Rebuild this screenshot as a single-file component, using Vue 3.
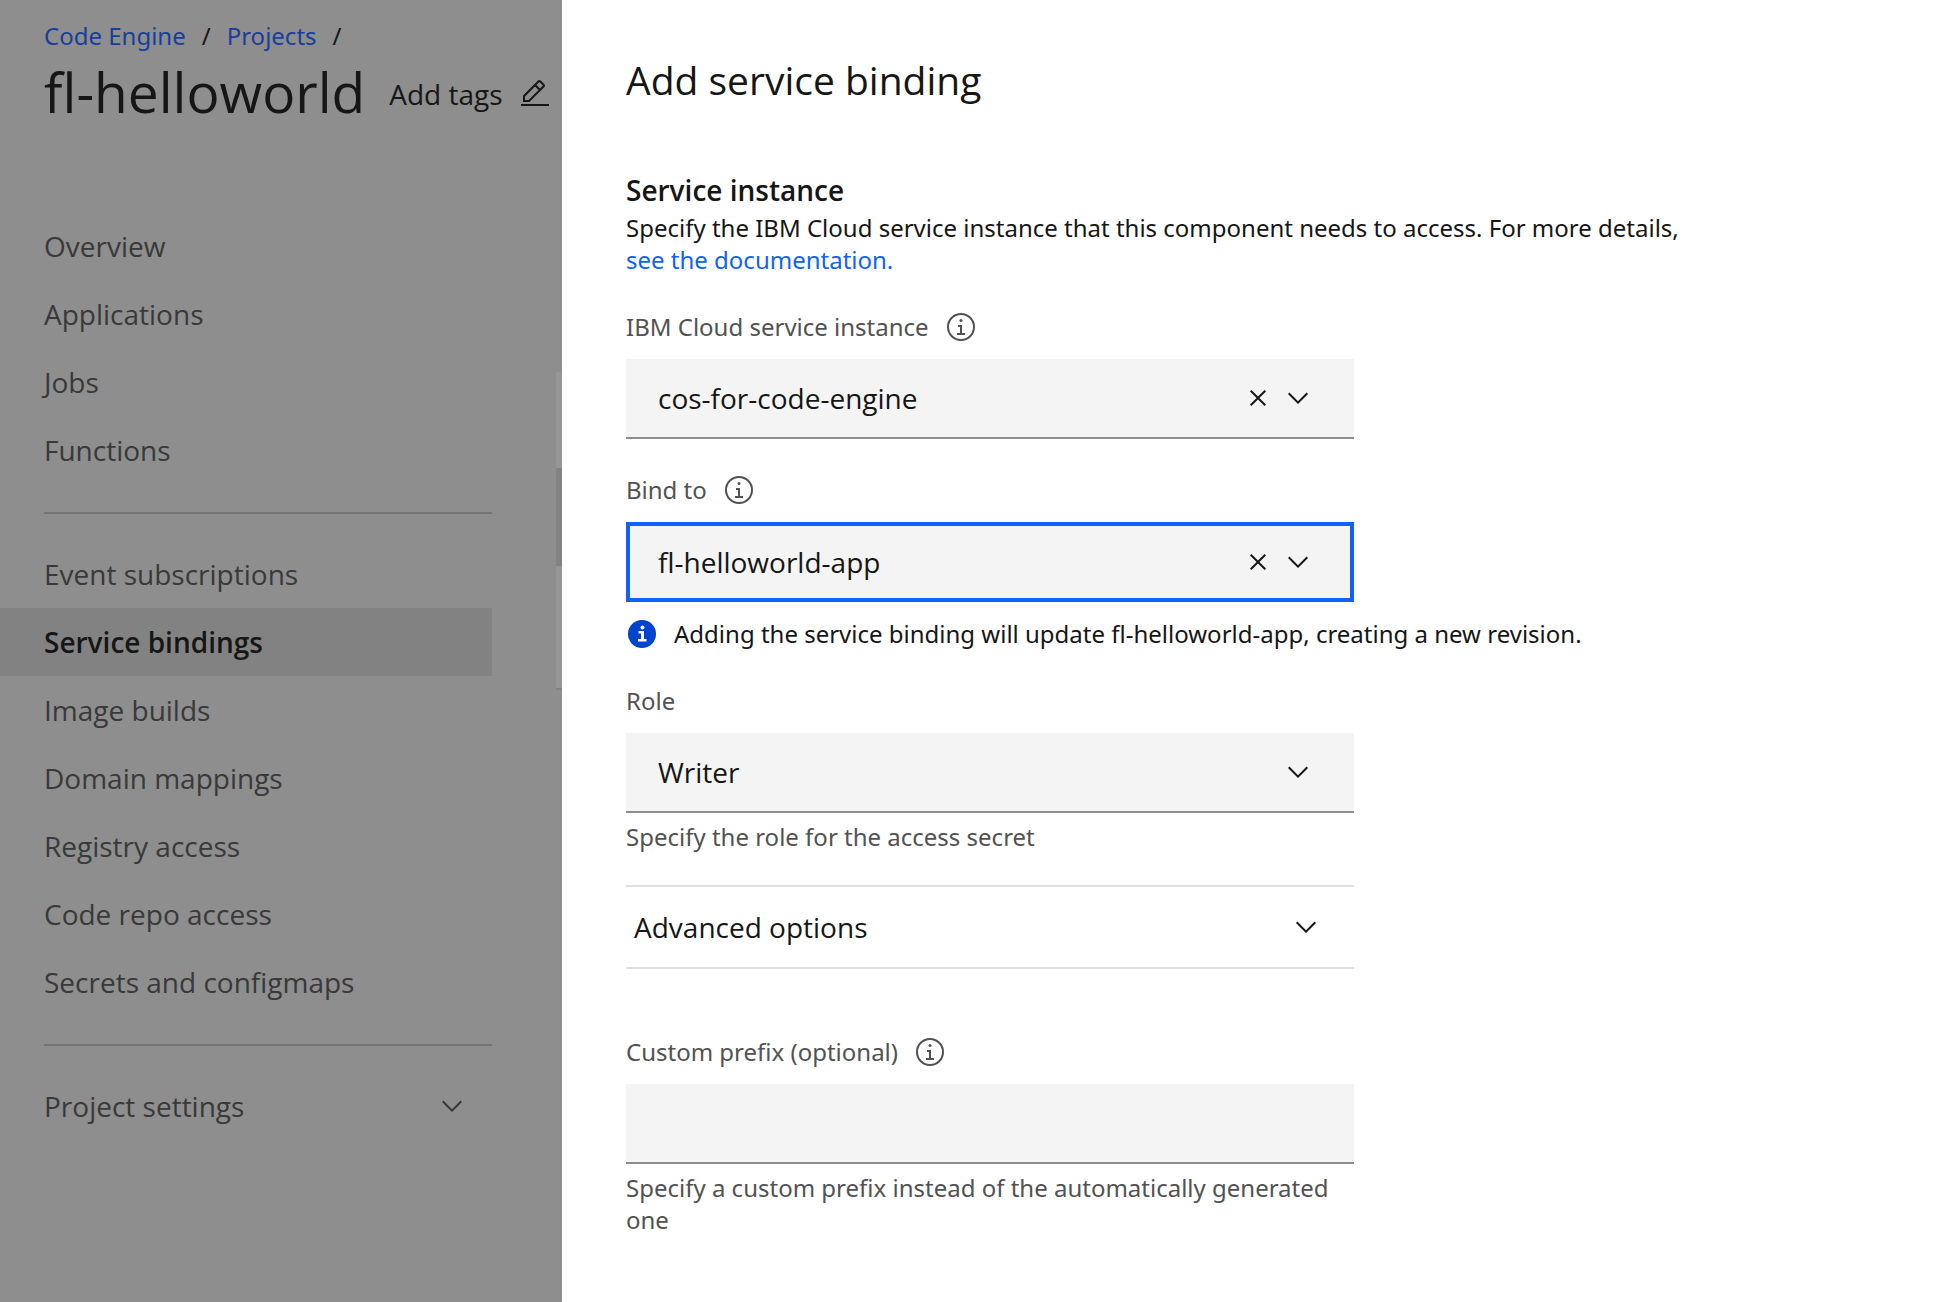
<script setup>
import { ref } from 'vue'

const mainLinks = ['Overview', 'Applications', 'Jobs', 'Functions']
const resourceLinks = [
  'Event subscriptions',
  'Service bindings',
  'Image builds',
  'Domain mappings',
  'Registry access',
  'Code repo access',
  'Secrets and configmaps',
]
const current = 'Service bindings'

const instance = ref('cos-for-code-engine')
const target = ref('fl-helloworld-app')
const role = ref('Writer')
const prefix = ref('')
</script>

<template>
  <div class="page">
    <svg class="sprite" aria-hidden="true">
      <symbol id="chevron" viewBox="0 0 16 16">
        <path d="M8 11 3 6 3.7 5.3 8 9.6 12.3 5.3 13 6z" />
      </symbol>
      <symbol id="close" viewBox="0 0 16 16">
        <path d="M12 4.7 11.3 4 8 7.3 4.7 4 4 4.7 7.3 8 4 11.3 4.7 12 8 8.7 11.3 12 12 11.3 8.7 8z" />
      </symbol>
      <symbol id="info" viewBox="0 0 32 32">
        <circle cx="16" cy="16" r="13" fill="none" stroke="currentColor" stroke-width="2" />
        <path d="M17 22V14H13V16H15V22H12V24H20V22z" />
        <circle cx="16" cy="9.5" r="1.5" />
      </symbol>
      <symbol id="edit" viewBox="0 0 32 32">
        <path d="M2 26H30V28H2zM25.4 9c.8-.8.8-2 0-2.8l-3.6-3.6c-.8-.8-2-.8-2.8 0l-15 15V24h6.4zM20.4 4 24 7.6l-3 3L17.4 7zM6 22v-3.6l10-10 3.6 3.6-10 10z" />
      </symbol>
    </svg>

    <aside class="backdrop">
      <div class="side">
        <nav class="crumbs" aria-label="Breadcrumb">
          <a href="#">Code Engine</a><span>/</span><a href="#">Projects</a><span>/</span>
        </nav>
        <div class="project">
          <h1>fl-helloworld</h1>
          <button type="button" class="tags">
            Add tags
            <svg class="icon"><use href="#edit" /></svg>
          </button>
        </div>

        <nav class="menu" aria-label="Project">
          <a v-for="item in mainLinks" :key="item" href="#">{{ item }}</a>
          <hr />
          <a
            v-for="item in resourceLinks"
            :key="item"
            href="#"
            :class="{ selected: item === current }"
          >{{ item }}</a>
          <hr />
          <button type="button">
            Project settings
            <svg class="icon"><use href="#chevron" /></svg>
          </button>
        </nav>
      </div>
      <div class="table-edge">
        <div class="edge-toolbar"></div>
        <div class="edge-header"></div>
        <div class="edge-body"></div>
      </div>
    </aside>

    <main class="panel">
      <h2>Add service binding</h2>

      <h3>Service instance</h3>
      <p class="intro">
        Specify the IBM Cloud service instance that this component needs to access. For more details,
        <a href="#">see the documentation.</a>
      </p>

      <form class="form" @submit.prevent>
        <div class="field">
          <div class="label">
            <label for="instance">IBM Cloud service instance</label>
            <button type="button" aria-label="About service instance"><svg class="icon"><use href="#info" /></svg></button>
          </div>
          <div class="combo">
            <input id="instance" v-model="instance" type="text" />
            <button type="button" aria-label="Clear instance" @click="instance = ''"><svg class="icon"><use href="#close" /></svg></button>
            <button type="button" aria-label="Open instances"><svg class="icon"><use href="#chevron" /></svg></button>
          </div>
        </div>

        <div class="field">
          <div class="label">
            <label for="target">Bind to</label>
            <button type="button" aria-label="About bind to"><svg class="icon"><use href="#info" /></svg></button>
          </div>
          <div class="combo focused">
            <input id="target" v-model="target" type="text" />
            <button type="button" aria-label="Clear target" @click="target = ''"><svg class="icon"><use href="#close" /></svg></button>
            <button type="button" aria-label="Open targets"><svg class="icon"><use href="#chevron" /></svg></button>
          </div>
          <p class="notice">
            <svg class="icon" viewBox="0 0 32 32">
              <circle cx="16" cy="16" r="14" fill="#0043ce" />
              <path d="M18 21V13H12.500V15.500H15V21H12V23.500H20.500V21z" fill="#fff" />
              <circle cx="16.500" cy="9.500" r="2" fill="#fff" />
            </svg>
            Adding the service binding will update fl-helloworld-app, creating a new revision.
          </p>
        </div>

        <div class="field">
          <div class="label"><label for="role">Role</label></div>
          <div class="combo">
            <select id="role" v-model="role">
              <option>Reader</option>
              <option>Writer</option>
              <option>Manager</option>
            </select>
            <svg class="icon select-arrow"><use href="#chevron" /></svg>
          </div>
          <p class="helper">Specify the role for the access secret</p>
        </div>

        <button type="button" class="accordion">
          Advanced options
          <svg class="icon"><use href="#chevron" /></svg>
        </button>

        <div class="field">
          <div class="label">
            <label for="prefix">Custom prefix (optional)</label>
            <button type="button" aria-label="About custom prefix"><svg class="icon"><use href="#info" /></svg></button>
          </div>
          <div class="combo"><input id="prefix" v-model="prefix" type="text" /></div>
          <p class="helper">Specify a custom prefix instead of the automatically generated one</p>
        </div>
      </form>
    </main>
  </div>
</template>

<style>
body {
  margin: 0;
}
</style>

<style scoped>
.page {
  display: flex;
  min-height: 100vh;
  color: #161616;
  font: 400 28px/36px "Open Sans", "Noto Sans", sans-serif;
}
h1, h2, h3, p {
  margin: 0;
}
a {
  text-decoration: none;
}
button {
  padding: 0;
  border: 0;
  background: none;
  color: inherit;
  font: inherit;
  cursor: pointer;
}
.sprite {
  position: absolute;
  width: 0;
  height: 0;
}
.icon {
  display: block;
  flex: none;
  width: 32px;
  height: 32px;
  fill: currentColor;
}

/* Dimmed page behind the panel */
.backdrop {
  display: flex;
  flex: none;
  width: 562px;
  background: #8e8e8e;
}
.side {
  flex: 1;
  min-width: 0;
  padding-top: 20px;
}
.crumbs {
  display: flex;
  gap: 16px;
  padding-left: 44px;
  font: 400 24px/32px "Noto Sans", sans-serif;
}
.crumbs a {
  color: #173f9b;
}
.project {
  display: flex;
  align-items: center;
  gap: 24px;
  margin-top: 8px;
  padding-left: 44px;
  white-space: nowrap;
}
h1 {
  font-size: 55px;
  font-weight: 400;
  line-height: 64px;
}
.tags {
  display: flex;
  align-items: center;
  gap: 16px;
  padding-top: 4px;
}
.menu {
  display: flex;
  flex-direction: column;
  width: 492px;
  margin-top: 88px;
  color: #393939;
}
.menu a,
.menu button {
  display: flex;
  align-items: center;
  justify-content: space-between;
  height: 68px;
  padding: 0 24px 0 44px;
  color: inherit;
}
.menu .selected {
  background: #828282;
  color: #161616;
  font-weight: 600;
}
.menu hr {
  height: 2px;
  margin: 28px 0 26px 44px;
  border: 0;
  background: #747474;
}
.table-edge {
  width: 6px;
  padding-top: 372px;
}
.edge-toolbar {
  height: 96px;
  background: #969696;
}
.edge-header {
  height: 98px;
  background: #828282;
}
.edge-body {
  height: 122px;
  border-bottom: 2px solid #848484;
  background: #969696;
}

/* Side panel */
.panel {
  flex: 1;
  min-width: 0;
  padding: 56px 64px 64px;
  background: #fff;
}
h2 {
  font-size: 39px;
  font-weight: 400;
  line-height: 48px;
}
h3 {
  margin-top: 68px;
  font-size: 28px;
  font-weight: 600;
}
.intro {
  max-width: 1080px;
  margin-top: 4px;
}
.intro a {
  color: #0f62fe;
}
.intro,
.label,
.notice,
.helper {
  font: 400 24px/32px "Noto Sans", sans-serif;
}
.form {
  max-width: 728px;
}
.field {
  margin-top: 35px;
}
.label {
  display: flex;
  gap: 16px;
  margin-bottom: 16px;
  color: #525252;
}
.combo {
  position: relative;
  display: flex;
  align-items: center;
  box-sizing: border-box;
  height: 80px;
  padding-right: 40px;
  gap: 8px;
  border-bottom: 2px solid #8d8d8d;
  background: #f4f4f4;
}
.combo.focused {
  border-bottom: 0;
  box-shadow: inset 0 0 0 4px #0f62fe;
}
.combo input,
.combo select {
  flex: 1;
  min-width: 0;
  height: 100%;
  padding: 0 0 0 32px;
  border: 0;
  border-radius: 0;
  outline: 0;
  background: none;
  color: inherit;
  font: inherit;
  appearance: none;
}
.select-arrow {
  pointer-events: none;
}
.notice {
  display: flex;
  gap: 16px;
  margin-top: 16px;
  white-space: nowrap;
}
.helper {
  margin-top: 8px;
  color: #525252;
}
.accordion {
  display: flex;
  align-items: center;
  justify-content: space-between;
  box-sizing: border-box;
  width: 100%;
  height: 84px;
  margin: 32px 0 67px;
  padding: 0 32px 0 8px;
  border-top: 2px solid #e0e0e0;
  border-bottom: 2px solid #e0e0e0;
}
.accordion + .field {
  margin-top: 0;
}
</style>
